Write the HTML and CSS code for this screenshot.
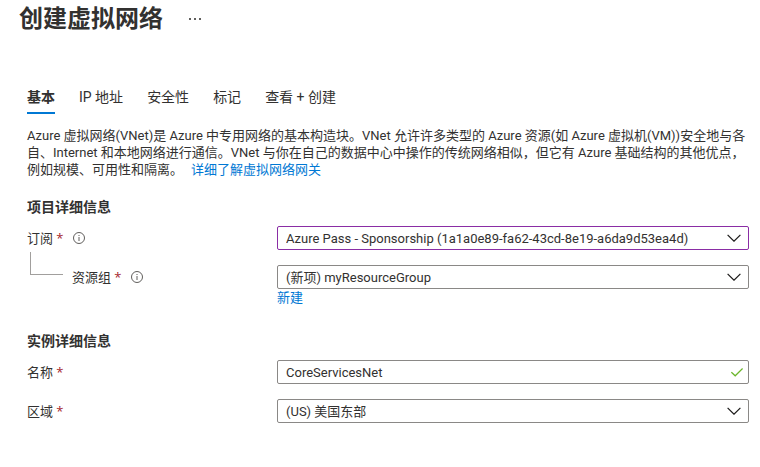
FILE: index.html
```html
<!DOCTYPE html>
<html lang="zh-CN">
<head>
<meta charset="utf-8">
<meta name="viewport" content="width=device-width, initial-scale=1">
<title>创建虚拟网络</title>
<link rel="stylesheet" href="styles.css">
</head>
<body>
<svg class="sprite" aria-hidden="true">
  <symbol id="chevron" viewBox="0 0 14 8"><path d="M.6.8 7 7.2 13.4.8" fill="none" stroke="currentColor" stroke-width="1.2"/></symbol>
  <symbol id="check" viewBox="0 0 12 9"><path d="M.4 4.2 4.2 7.8 11.6.5" fill="none" stroke="currentColor" stroke-width="1.2"/></symbol>
  <symbol id="info" viewBox="0 0 12 12"><circle cx="6" cy="6" r="5.5" fill="none" stroke="currentColor" stroke-width="1"/><path d="M6 5v4M6 3v1" stroke="currentColor" stroke-width="1"/></symbol>
</svg>
<header class="page-header">
  <h1>创建虚拟网络</h1>
  <button class="more" type="button" aria-label="更多">
    <svg viewBox="0 0 12 2"><path d="M0 0h2v2H0zM5 0h2v2H5zM10 0h2v2h-2z" fill="currentColor"/></svg>
  </button>
</header>
<main>
  <nav class="tabs">
    <a class="tab active" href="#basic" aria-current="page">基本</a>
    <a class="tab" href="#ip">IP 地址</a>
    <a class="tab" href="#security">安全性</a>
    <a class="tab" href="#tags">标记</a>
    <a class="tab" href="#review">查看 + 创建</a>
  </nav>
  <p class="intro">Azure 虚拟网络(VNet)是 Azure 中专用网络的基本构造块。VNet 允许许多类型的 Azure 资源(如 Azure 虚拟机(VM))安全地与各自、Internet 和本地网络进行通信。VNet 与你在自己的数据中心中操作的传统网络相似，但它有 Azure 基础结构的其他优点，例如规模、可用性和隔离。<a class="learn" href="#learn">详细了解虚拟网络网关</a></p>
  <form>
    <section>
      <h2>项目详细信息</h2>
      <div class="row">
        <div class="label"><label for="subscription">订阅 <span class="required">*</span></label><svg class="info"><use href="#info"/></svg></div>
        <div class="field focused">
          <select id="subscription"><option>Azure Pass - Sponsorship (1a1a0e89-fa62-43cd-8e19-a6da9d53ea4d)</option></select>
          <svg class="chevron"><use href="#chevron"/></svg>
        </div>
      </div>
      <div class="row">
        <div class="label nested"><span class="branch"></span><label for="group">资源组 <span class="required">*</span></label><svg class="info"><use href="#info"/></svg></div>
        <div class="field">
          <select id="group"><option>(新项) myResourceGroup</option></select>
          <svg class="chevron"><use href="#chevron"/></svg>
        </div>
        <a class="new" href="#new">新建</a>
      </div>
    </section>
    <section>
      <h2>实例详细信息</h2>
      <div class="row">
        <div class="label"><label for="name">名称 <span class="required">*</span></label></div>
        <div class="field">
          <input id="name" type="text" value="CoreServicesNet">
          <svg class="check"><use href="#check"/></svg>
        </div>
      </div>
      <div class="row">
        <div class="label"><label for="region">区域 <span class="required">*</span></label></div>
        <div class="field">
          <select id="region"><option>(US) 美国东部</option></select>
          <svg class="chevron"><use href="#chevron"/></svg>
        </div>
      </div>
    </section>
  </form>
</main>
</body>
</html>
```
FILE: styles.css
```css
* { box-sizing: border-box; }
body {
  margin: 0;
  background: #fff;
  color: #323130;
  font: 13px/17px Roboto, "Noto Sans CJK SC", sans-serif;
}
a { color: #0078d4; text-decoration: none; }
.sprite { display: none; }
.page-header {
  display: flex;
  align-items: center;
  gap: 24px;
  height: 37px;
  padding-left: 19px;
}
h1 { margin: 0; font-size: 24px; line-height: 36px; font-weight: 700; }
.more {
  display: flex;
  padding: 2px;
  border: 0;
  background: none;
  color: #605e5c;
}
.more svg { width: 12px; height: 2px; }
main { padding: 47px 11px 24px 27px; }
.tabs { display: flex; gap: 24px; }
.tab {
  padding: 3px 0 5px;
  border-bottom: 2px solid transparent;
  color: #323130;
  font-size: 14px;
  line-height: 20px;
}
.tab.active { border-color: #0078d4; font-weight: 600; }
.intro { margin: 13px 0 0; }
.learn { display: inline-block; margin-left: 8px; }
h2 { margin: 0; font-size: 14px; line-height: 20px; font-weight: 600; }
section { padding-top: 19px; }
section + section { padding-top: 10px; }
.row {
  display: grid;
  grid-template-columns: 250px 1fr;
  margin-bottom: 15px;
}
h2 + .row { margin-top: 9px; }
.label { display: flex; align-items: center; height: 24px; }
.required { color: #a4262c; font-family: "Open Sans", sans-serif; }
.info { width: 12px; height: 12px; margin-left: 10px; color: #605e5c; }
.nested { position: relative; padding-left: 45px; }
.branch {
  position: absolute;
  left: 3px;
  top: -13px;
  width: 33px;
  height: 23px;
  border: solid #a19f9d;
  border-width: 0 0 1px 1px;
}
.field { position: relative; color: #1b1a19; }
.field select, .field input {
  display: block;
  width: 100%;
  height: 24px;
  margin: 0;
  padding: 0 32px 0 8px;
  border: 1px solid #8a8886;
  border-radius: 2px;
  outline: 0;
  appearance: none;
  background: #fff;
  color: #323130;
  font: inherit;
}
.field.focused select { border-color: #8a2da5; }
.chevron, .check { position: absolute; pointer-events: none; }
.chevron { top: 8px; right: 8px; width: 14px; height: 8px; }
.check { top: 8px; right: 6px; width: 12px; height: 9px; color: #6bb52a; }
.new { grid-column: 2; justify-self: start; }
```
